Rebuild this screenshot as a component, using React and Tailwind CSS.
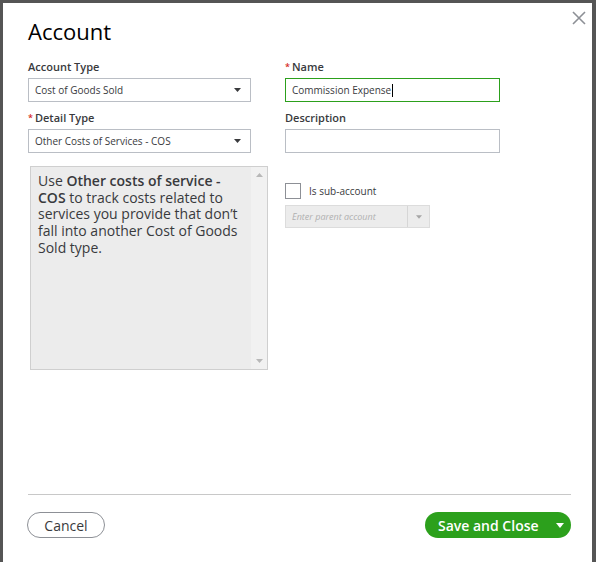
import React from "react";

const font = { fontFamily: '"Open Sans", "Noto Sans", sans-serif' };

function Caret({ className = "" }) {
  return (
    <svg width="7" height="4" viewBox="0 0 7 4" className={className}>
      <path d="M0 0 L7 0 L3.5 4 Z" fill="#393a3d" />
    </svg>
  );
}

function Select({ value }) {
  return (
    <div className="flex items-center justify-between h-[24px] w-[223px] border border-[#babec5] px-[6px] text-[10px] text-[#393a3d]">
      <span>{value}</span>
      <Caret className="mr-[3px]" />
    </div>
  );
}

export default function App() {
  return (
    <div className="w-[596px] h-[562px] bg-[#555555] pt-[3px] pl-[3px] pr-[4px] flex" style={font}>
      <div className="relative flex-1 bg-white flex flex-col">
        <button className="absolute right-[6px] top-[8px] text-[#8d9096]">
          <svg width="14" height="14" viewBox="0 0 14 14">
            <path d="M1 1 L13 13 M13 1 L1 13" stroke="#8d9096" strokeWidth="1.6" />
          </svg>
        </button>
        <div className="pl-[25px] pt-[13px] h-[56px] text-[22px] leading-[30px] text-[#000] font-medium">Account</div>

        <div className="flex pl-[25px] gap-[34px]">
          <div className="flex flex-col w-[240px]">
            <div className="text-[11px] font-semibold text-[#393a3d] leading-[15px] h-[19px]">Account Type</div>
            <Select value="Cost of Goods Sold" />
            <div className="text-[11px] font-semibold text-[#393a3d] leading-[15px] h-[19px] mt-[8px]">
              <span className="text-[#d52b1e] text-[9px] mr-[2px] align-top">*</span>Detail Type
            </div>
            <Select value="Other Costs of Services - COS" />
            <div className="mt-[13px] ml-[2px] w-[238px] h-[204px] border border-[#cfcfcf] bg-[#ececec] flex">
              <div className="flex-1 px-[7px] pt-[6px] text-[14px] leading-[16.7px] text-[#393a3d]">
                Use <b className="font-semibold">Other costs of service - COS</b> to track costs related to services you provide that don’t fall into another Cost of Goods Sold type.
              </div>
              <div className="w-[16px] bg-[#f1f1f1] flex flex-col justify-between items-center py-[6px]">
                <svg width="7" height="4" viewBox="0 0 7 4"><path d="M0 4 L7 4 L3.5 0 Z" fill="#b8b8b8" /></svg>
                <svg width="7" height="4" viewBox="0 0 7 4"><path d="M0 0 L7 0 L3.5 4 Z" fill="#b8b8b8" /></svg>
              </div>
            </div>
          </div>

          <div className="flex flex-col w-[215px] -ml-[17px]">
            <div className="text-[11px] font-semibold text-[#393a3d] leading-[15px] h-[19px]">
              <span className="text-[#d52b1e] text-[9px] mr-[2px] align-top">*</span>Name
            </div>
            <div className="flex items-center h-[24px] w-[215px] border border-[#2ca01c] px-[6px] text-[10px] text-[#393a3d]">
              Commission Expense<span className="w-px h-[13px] bg-black ml-px"></span>
            </div>
            <div className="text-[11px] font-semibold text-[#393a3d] leading-[15px] h-[19px] mt-[8px]">Description</div>
            <div className="h-[24px] w-[215px] border border-[#babec5]"></div>
            <div className="flex items-center gap-[8px] mt-[30px]">
              <div className="w-[16px] h-[16px] border border-[#8d9096] bg-white"></div>
              <span className="text-[10px] text-[#393a3d]">Is sub-account</span>
            </div>
            <div className="flex mt-[6px] w-[145px] h-[23px] border border-[#dcdcdc] bg-[#ececec]">
              <div className="flex-1 flex items-center px-[6px] text-[9px] italic text-[#b0b0b0]">Enter parent account</div>
              <div className="w-[22px] border-l border-[#d6d6d6] flex items-center justify-center">
                <svg width="6" height="4" viewBox="0 0 7 4"><path d="M0 0 L7 0 L3.5 4 Z" fill="#a6a6a6" /></svg>
              </div>
            </div>
          </div>
        </div>

        <div className="mt-auto ml-[25px] mr-[21px] border-t border-[#c8c8c8]"></div>
        <div className="flex justify-between items-center pl-[24px] pr-[21px] pt-[17px] pb-[24px]">
          <button className="h-[26px] w-[78px] rounded-full border border-[#8d9096] text-[14px] text-[#393a3d] bg-white">Cancel</button>
          <button className="h-[26px] w-[146px] rounded-full bg-[#2ca01c] text-white text-[14px] font-semibold flex items-center pl-[13px] pr-[7px] justify-between">
            <span>Save and Close</span>
            <svg width="8" height="5" viewBox="0 0 8 5"><path d="M0 0 L8 0 L4 5 Z" fill="#fff" /></svg>
          </button>
        </div>
      </div>
    </div>
  );
}
